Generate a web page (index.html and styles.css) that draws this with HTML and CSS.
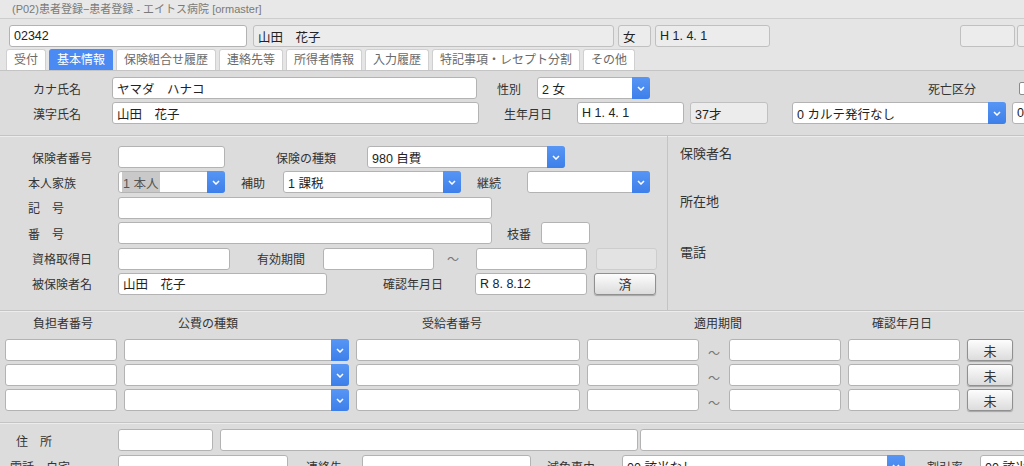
FILE: index.html
```html
<!DOCTYPE html>
<html lang="ja">
<head>
    <meta charset="UTF-8">
    <title>(P02)患者登録−患者登録 - エイトス病院 [ormaster]</title>
    <link rel="stylesheet" href="styles.css">
</head>
<body>
    <div class="titlebar">(P02)患者登録−患者登録 - エイトス病院 [ormaster]</div>

    <!-- 患者ヘッダ -->
    <div class="head">
        <div class="row">
            <input class="fld w-238" value="02342">
            <input class="fld ro w-361 ml-6" value="山田　花子" readonly>
            <input class="fld ro w-33 ml-4" value="女" readonly>
            <input class="fld ro w-115 ml-4" value="H 1. 4. 1" readonly>
            <input class="fld ro w-55 ml-190" readonly>
            <input class="fld ro w-55 ml-2" readonly>
        </div>
        <div class="tabs">
            <div class="tab">受付</div>
            <div class="tab active">基本情報</div>
            <div class="tab">保険組合せ履歴</div>
            <div class="tab">連絡先等</div>
            <div class="tab">所得者情報</div>
            <div class="tab">入力履歴</div>
            <div class="tab">特記事項・レセプト分割</div>
            <div class="tab">その他</div>
        </div>
    </div>

    <!-- 氏名 -->
    <div class="sec sec-name">
        <div class="row">
            <span class="lbl head-lbl">カナ氏名</span>
            <input class="fld w-365" value="ヤマダ　ハナコ">
            <span class="lbl ml-20">性別</span>
            <div class="sel w-113 ml-16"><span class="val">2 女</span><span class="btn"><svg width="8" height="5" viewBox="0 0 8 5"><path d="M1 1L4 4L7 1" fill="none" stroke="#fff" stroke-width="1.5"/></svg></span></div>
            <span class="lbl ml-278">死亡区分</span>
            <span class="chk ml-43"></span>
        </div>
        <div class="row">
            <span class="lbl head-lbl">漢字氏名</span>
            <input class="fld w-367" value="山田　花子">
            <span class="lbl ml-25">生年月日</span>
            <input class="fld w-107 ml-25" value="H 1. 4. 1">
            <input class="fld ro w-78 ml-6" value="37才" readonly>
            <div class="sel w-214 ml-24"><span class="val">0 カルテ発行なし</span><span class="btn"><svg width="8" height="5" viewBox="0 0 8 5"><path d="M1 1L4 4L7 1" fill="none" stroke="#fff" stroke-width="1.5"/></svg></span></div>
            <input class="fld w-60 ml-6" value="0">
        </div>
    </div>

    <!-- 保険 -->
    <div class="sec sec-ins">
        <div class="ins">
            <div class="row">
                <span class="lbl col pl-32">保険者番号</span>
                <input class="fld w-107">
                <span class="lbl ml-51">保険の種類</span>
                <div class="sel w-198 ml-31"><span class="val">980 自費</span><span class="btn"><svg width="8" height="5" viewBox="0 0 8 5"><path d="M1 1L4 4L7 1" fill="none" stroke="#fff" stroke-width="1.5"/></svg></span></div>
            </div>
            <div class="row">
                <span class="lbl col pl-28">本人家族</span>
                <div class="sel w-107"><span class="val"><span class="hl">1 本人</span></span><span class="btn"><svg width="8" height="5" viewBox="0 0 8 5"><path d="M1 1L4 4L7 1" fill="none" stroke="#fff" stroke-width="1.5"/></svg></span></div>
                <span class="lbl ml-16">補助</span>
                <div class="sel w-178 ml-18"><span class="val">1 課税</span><span class="btn"><svg width="8" height="5" viewBox="0 0 8 5"><path d="M1 1L4 4L7 1" fill="none" stroke="#fff" stroke-width="1.5"/></svg></span></div>
                <span class="lbl ml-16">継続</span>
                <div class="sel w-123 ml-26"><span class="val"></span><span class="btn"><svg width="8" height="5" viewBox="0 0 8 5"><path d="M1 1L4 4L7 1" fill="none" stroke="#fff" stroke-width="1.5"/></svg></span></div>
            </div>
            <div class="row">
                <span class="lbl col pl-28">記　号</span>
                <input class="fld w-374">
            </div>
            <div class="row">
                <span class="lbl col pl-28">番　号</span>
                <input class="fld w-374">
                <span class="lbl ml-15">枝番</span>
                <input class="fld w-49 ml-10">
            </div>
            <div class="row">
                <span class="lbl col pl-32">資格取得日</span>
                <input class="fld w-112">
                <span class="lbl ml-27">有効期間</span>
                <input class="fld w-111 ml-18">
                <span class="tilde ml-13">～</span>
                <input class="fld w-111 ml-17">
                <input class="fld dis w-61 ml-9" readonly>
            </div>
            <div class="row">
                <span class="lbl col pl-32">被保険者名</span>
                <input class="fld w-209" value="山田　花子">
                <span class="lbl ml-56">確認年月日</span>
                <input class="fld w-112 ml-32" value="R 8. 8.12">
                <button class="pbtn w-62 ml-7">済</button>
            </div>
        </div>
        <div class="insurer">
            <div class="info">保険者名</div>
            <div class="info">所在地</div>
            <div class="info">電話</div>
        </div>
    </div>

    <!-- 公費 -->
    <div class="sec sec-pub">
        <div class="pub-head">
            <span class="c1">負担者番号</span>
            <span class="c2">公費の種類</span>
            <span class="c3">受給者番号</span>
            <span class="c4">適用期間</span>
            <span class="c5">確認年月日</span>
        </div>
        <div class="pub-grid">
            <input class="fld">
            <div class="sel"><span class="val"></span><span class="btn"><svg width="8" height="5" viewBox="0 0 8 5"><path d="M1 1L4 4L7 1" fill="none" stroke="#fff" stroke-width="1.5"/></svg></span></div>
            <input class="fld">
            <input class="fld">
            <span class="tilde">～</span>
            <input class="fld">
            <input class="fld">
            <button class="pbtn">未</button>

            <input class="fld">
            <div class="sel"><span class="val"></span><span class="btn"><svg width="8" height="5" viewBox="0 0 8 5"><path d="M1 1L4 4L7 1" fill="none" stroke="#fff" stroke-width="1.5"/></svg></span></div>
            <input class="fld">
            <input class="fld">
            <span class="tilde">～</span>
            <input class="fld">
            <input class="fld">
            <button class="pbtn">未</button>

            <input class="fld">
            <div class="sel"><span class="val"></span><span class="btn"><svg width="8" height="5" viewBox="0 0 8 5"><path d="M1 1L4 4L7 1" fill="none" stroke="#fff" stroke-width="1.5"/></svg></span></div>
            <input class="fld">
            <input class="fld">
            <span class="tilde">～</span>
            <input class="fld">
            <input class="fld">
            <button class="pbtn">未</button>
        </div>
    </div>

    <!-- 住所 -->
    <div class="sec sec-addr">
        <div class="row">
            <span class="lbl col pl-16">住　所</span>
            <input class="fld w-95">
            <input class="fld w-418 ml-7">
            <input class="fld w-400 ml-2">
        </div>
        <div class="row">
            <span class="lbl col pl-10">電話　自宅</span>
            <input class="fld w-170">
            <span class="lbl ml-18">連絡先</span>
            <input class="fld w-169 ml-20">
            <span class="lbl ml-16">減免事由</span>
            <div class="sel w-283 ml-27"><span class="val">00 該当なし</span><span class="btn"><svg width="8" height="5" viewBox="0 0 8 5"><path d="M1 1L4 4L7 1" fill="none" stroke="#fff" stroke-width="1.5"/></svg></span></div>
            <span class="lbl ml-22">割引率</span>
            <input class="fld w-100 ml-17" value="00 該当なし">
        </div>
    </div>
</body>
</html>
```

FILE: styles.css
```css
:root {
    --bg: #dcdcdc;
    --line: #c4c4c4;
    --border: #b3b3b3;
    --blue: #4a8af2;
    --text: #333;
}

* {
    margin: 0;
    padding: 0;
    box-sizing: border-box;
}

body {
    width: 1024px;
    height: 466px;
    overflow: hidden;
    background: var(--bg);
    color: var(--text);
    font-family: "Liberation Sans", "Noto Sans CJK JP", sans-serif;
    font-size: 12px;
}

.titlebar {
    height: 19px;
    line-height: 18px;
    padding-left: 12px;
    font-size: 11px;
    color: #7a7a7a;
    background: #e8e8e8;
    border-bottom: 1px solid #cdcdcd;
}

.row {
    display: flex;
    align-items: center;
    height: 22px;
    white-space: nowrap;
}

.row > * {
    flex: none;
}

/* ヘッダ */
.head {
    background: #e5e5e5;
    padding: 6px 0 0 9px;
    border-bottom: 1px solid var(--line);
}

.tabs {
    display: flex;
    gap: 3px;
    margin: 2px 0 0 -3px;
    height: 21px;
}

.tab {
    padding: 0 7px;
    line-height: 20px;
    background: #fff;
    color: #6a6a6a;
    border: 1px solid #d0d0d0;
    border-bottom: none;
    border-radius: 3px 3px 0 0;
    white-space: nowrap;
}

.tab.active {
    background: var(--blue);
    border-color: var(--blue);
    color: #fff;
}

/* 入力欄 */
.fld {
    height: 22px;
    padding: 0 4px;
    border: 1px solid var(--border);
    border-radius: 3px;
    background: #fff;
    font: 12.5px "Liberation Sans", "Noto Sans CJK JP", sans-serif;
    color: #222;
    outline: none;
}

.fld.ro {
    background: #ececec;
    border-color: #c0c0c0;
}

.fld.dis {
    background: #e3e3e3;
    border-color: #cdcdcd;
}

.sel {
    display: flex;
    height: 22px;
    border: 1px solid var(--border);
    border-radius: 3px;
    background: #fff;
    font-size: 12.5px;
    color: #222;
}

.sel .val {
    flex: 1;
    display: flex;
    align-items: center;
    padding-left: 4px;
    overflow: hidden;
}

.sel .hl {
    align-self: stretch;
    display: flex;
    align-items: center;
    margin-left: -1px;
    padding: 0 2px 0 1px;
    background: #c9c9c9;
    color: #555;
}

.sel .btn {
    width: 18px;
    margin: -1px -1px -1px 0;
    display: flex;
    align-items: center;
    justify-content: center;
    background: linear-gradient(#5796f5, #3d7fea);
    border-radius: 0 3px 3px 0;
}

.sel .btn svg {
    display: block;
}

.pbtn {
    height: 22px;
    border: 1px solid #909090;
    border-radius: 3px;
    background: linear-gradient(#fdfdfd, #dcdcdc);
    box-shadow: 0 1px 1px rgba(0, 0, 0, 0.25);
    font: 13px "Liberation Sans", "Noto Sans CJK JP", sans-serif;
    color: #333;
}

.chk {
    width: 14px;
    height: 13px;
    border: 1px solid #8a8a8a;
    border-radius: 2px;
    background: #fff;
}

.lbl {
    color: var(--text);
}

.lbl.col {
    width: 118px;
}

.head-lbl {
    width: 112px;
    padding-left: 33px;
}

.tilde {
    color: #777;
    font-size: 12px;
}

/* セクション */
.sec {
    border-bottom: 1px solid var(--line);
    box-shadow: 0 1px 0 #ececec;
}

.sec-name {
    height: 65px;
    padding-top: 6px;
}

.sec-name .row + .row {
    margin-top: 3px;
}

.sec-ins {
    display: flex;
    height: 175px;
}

.ins {
    width: 668px;
    padding-top: 10px;
    border-right: 1px solid var(--line);
}

.ins .row + .row {
    margin-top: 3.4px;
}

.insurer {
    flex: 1;
    padding: 10px 12px;
}

.info {
    height: 48px;
    line-height: 16px;
    font-size: 13px;
}

.info + .info {
    height: 51px;
}

.sec-pub {
    height: 112px;
    padding: 4px 0 0 5px;
}

.pub-head {
    display: flex;
    height: 18px;
    line-height: 18px;
    margin-left: -5px;
}

.pub-head span {
    flex: none;
    text-align: center;
}

.pub-head .c1 { width: 126px; }
.pub-head .c2 { width: 164px; }
.pub-head .c3 { width: 324px; }
.pub-head .c4 { width: 208px; }
.pub-head .c5 { width: 160px; }

.pub-grid {
    display: grid;
    grid-template-columns: 112px 225px 224px 112px 16px 112px 112px 46px;
    grid-auto-rows: 22px;
    column-gap: 7px;
    row-gap: 3px;
    margin-top: 6px;
    align-items: center;
}

.pub-grid .fld,
.pub-grid .sel {
    width: 100%;
}

.pub-grid .tilde {
    text-align: center;
    padding-top: 4px;
}

.sec-addr {
    padding-top: 6px;
    border-bottom: none;
    box-shadow: none;
}

.sec-addr .row + .row {
    margin-top: 4px;
}

/* 幅 */
.w-33 { width: 33px; }
.w-49 { width: 49px; }
.w-55 { width: 55px; }
.w-60 { width: 60px; }
.w-61 { width: 61px; }
.w-62 { width: 62px; }
.w-78 { width: 78px; }
.w-95 { width: 95px; }
.w-100 { width: 100px; }
.w-107 { width: 107px; }
.w-111 { width: 111px; }
.w-112 { width: 112px; }
.w-113 { width: 113px; }
.w-115 { width: 115px; }
.w-123 { width: 123px; }
.w-169 { width: 169px; }
.w-170 { width: 170px; }
.w-178 { width: 178px; }
.w-198 { width: 198px; }
.w-209 { width: 209px; }
.w-214 { width: 214px; }
.w-238 { width: 238px; }
.w-283 { width: 283px; }
.w-361 { width: 361px; }
.w-365 { width: 365px; }
.w-367 { width: 367px; }
.w-374 { width: 374px; }
.w-400 { width: 400px; }
.w-418 { width: 418px; }

/* 余白 */
.ml-2 { margin-left: 2px; }
.ml-4 { margin-left: 4px; }
.ml-6 { margin-left: 6px; }
.ml-7 { margin-left: 7px; }
.ml-9 { margin-left: 9px; }
.ml-10 { margin-left: 10px; }
.ml-13 { margin-left: 13px; }
.ml-15 { margin-left: 15px; }
.ml-16 { margin-left: 16px; }
.ml-17 { margin-left: 17px; }
.ml-18 { margin-left: 18px; }
.ml-20 { margin-left: 20px; }
.ml-22 { margin-left: 22px; }
.ml-24 { margin-left: 24px; }
.ml-25 { margin-left: 25px; }
.ml-26 { margin-left: 26px; }
.ml-27 { margin-left: 27px; }
.ml-31 { margin-left: 31px; }
.ml-32 { margin-left: 32px; }
.ml-43 { margin-left: 43px; }
.ml-51 { margin-left: 51px; }
.ml-56 { margin-left: 56px; }
.ml-190 { margin-left: 190px; }
.ml-278 { margin-left: 278px; }

.pl-10 { padding-left: 10px; }
.pl-16 { padding-left: 16px; }
.pl-28 { padding-left: 28px; }
.pl-32 { padding-left: 32px; }
```
